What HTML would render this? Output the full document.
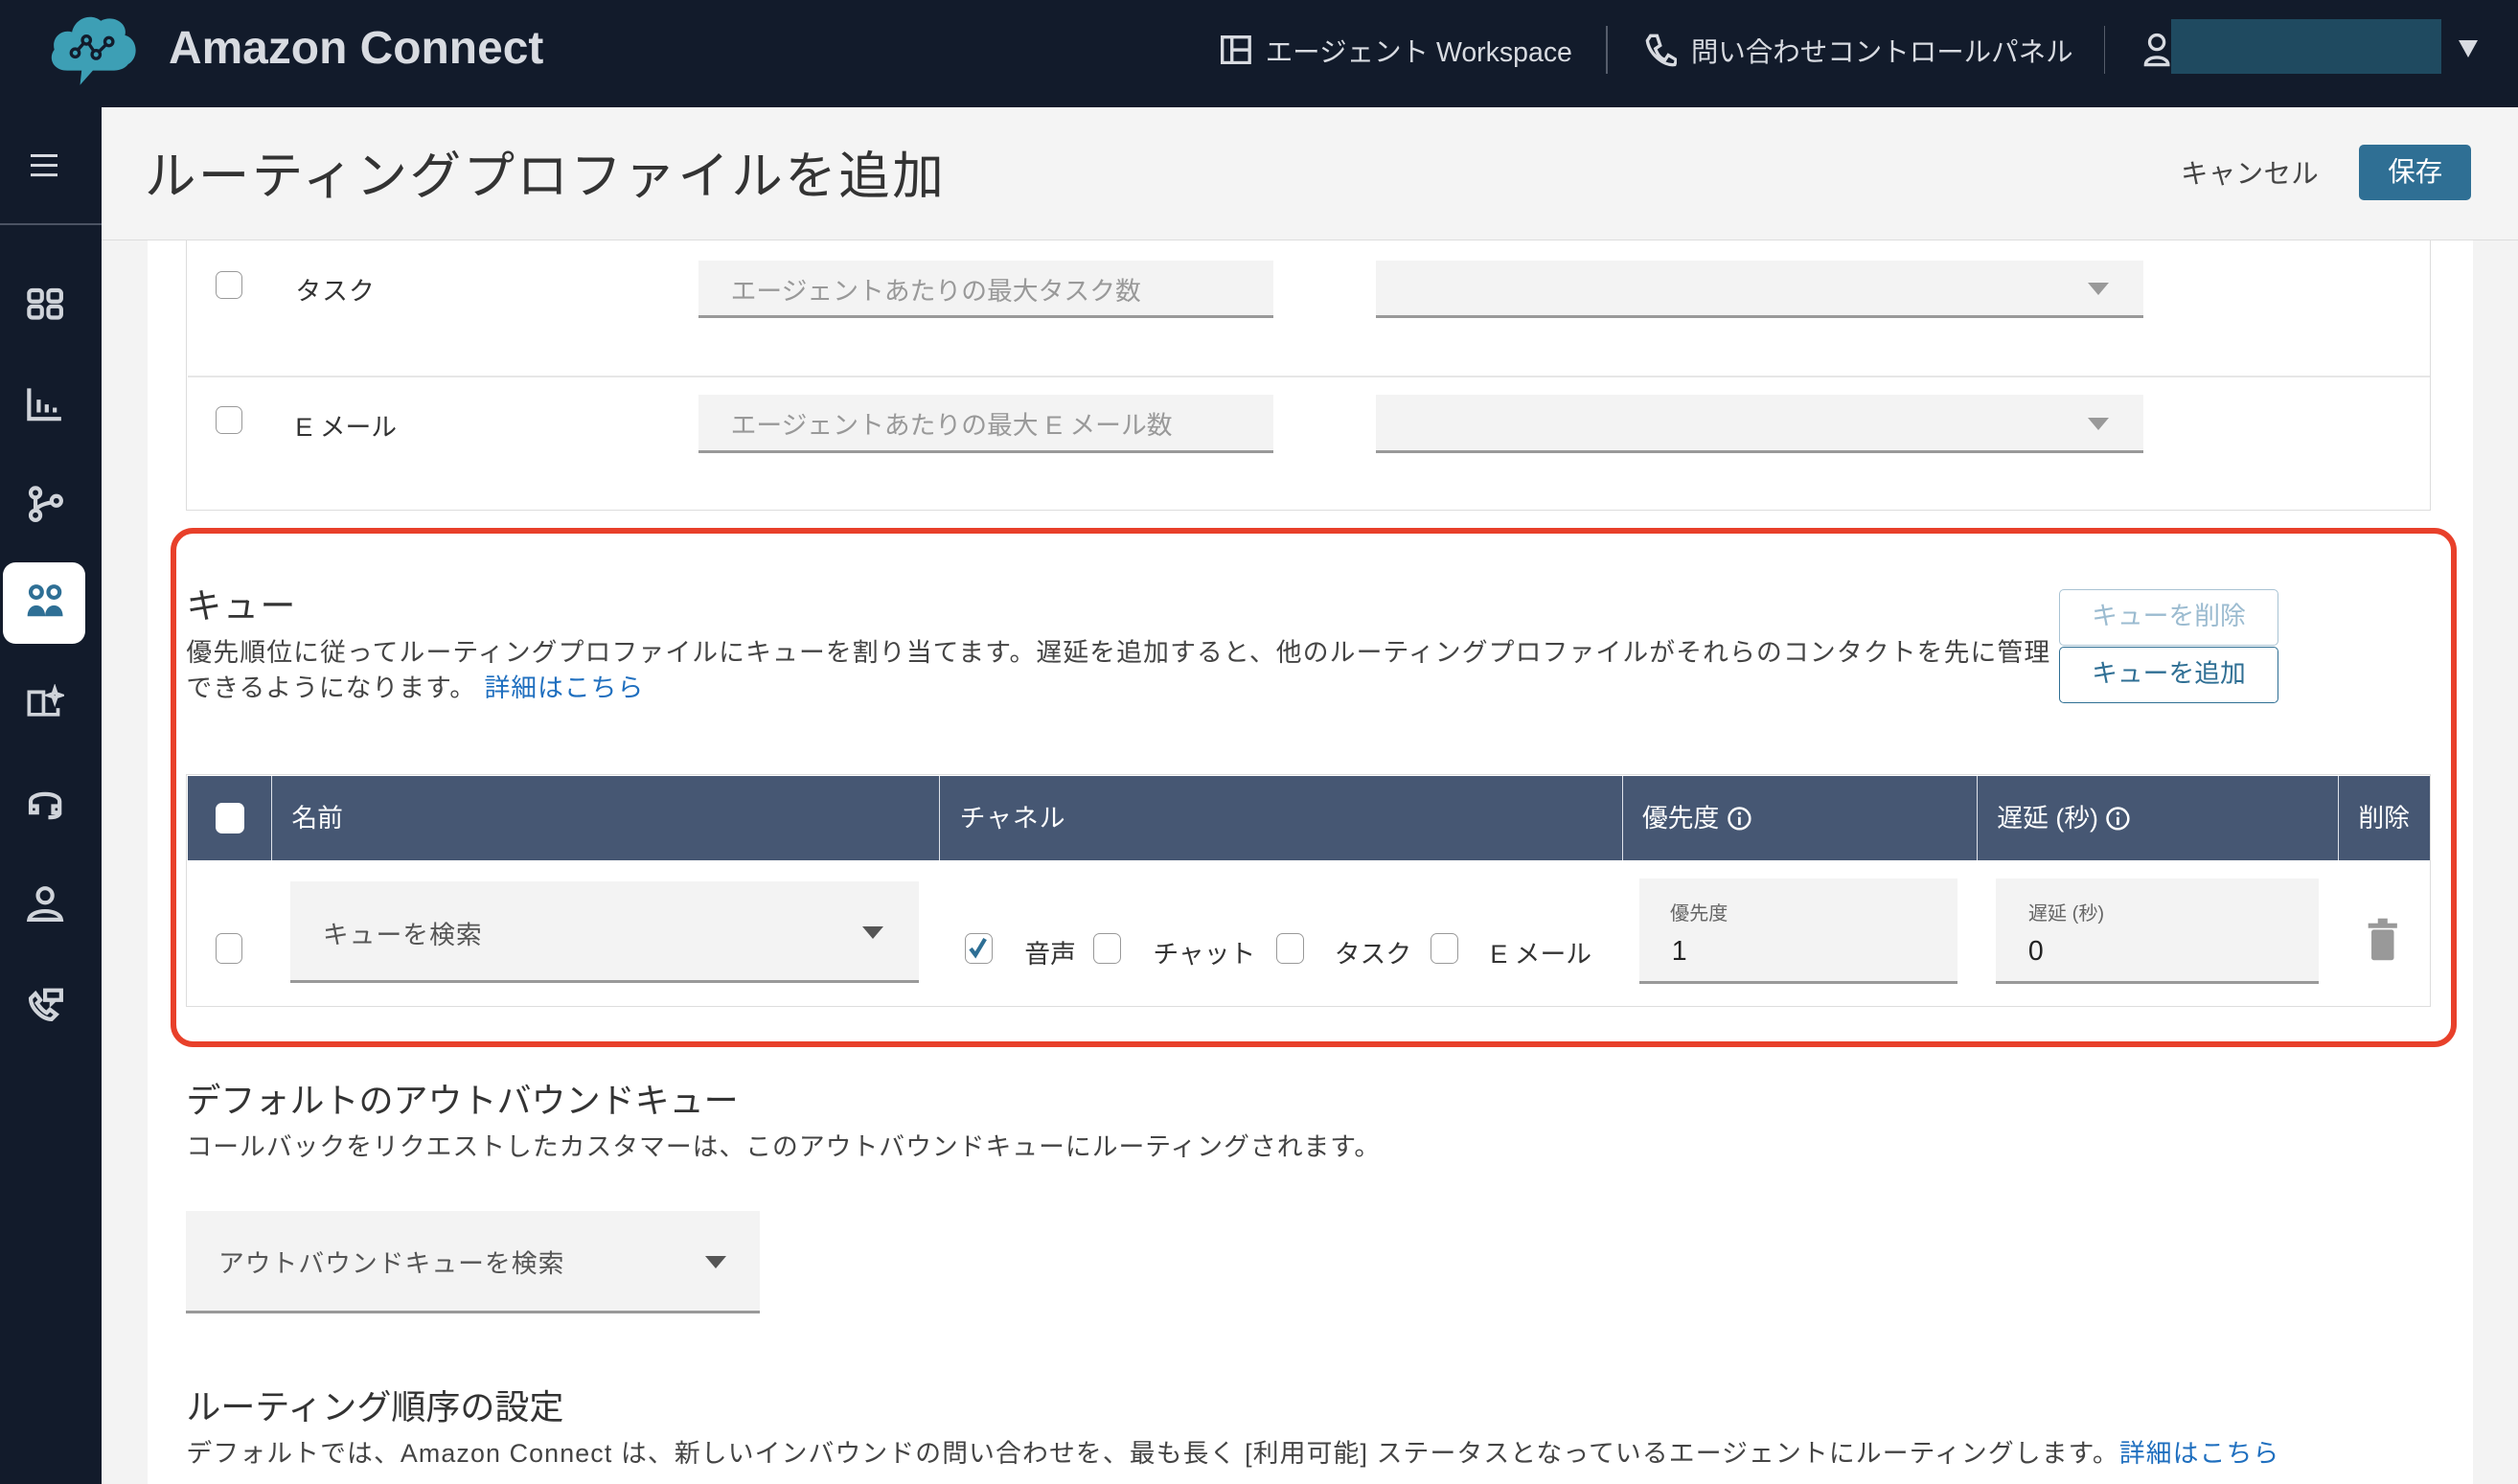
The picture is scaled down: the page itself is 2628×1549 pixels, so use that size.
<!DOCTYPE html>
<html><head><meta charset="utf-8"><style>
html{zoom:1.67602}
body{margin:0;width:1568px;height:924px;overflow:hidden;position:relative;background:#f3f3f3;font-family:"Liberation Sans","Noto Sans CJK JP",sans-serif;color:#333}
.a{position:absolute}
.hdr{left:0;top:0;width:1568px;height:67px;background:#121b2b}
.side{left:0;top:67px;width:63px;height:857px;background:#121b2b}
.t{position:absolute;white-space:nowrap}
.ls{letter-spacing:0.6px}
.cb{position:absolute;width:17px;height:17px;border:1px solid #999;border-radius:4px;background:#fff;box-sizing:border-box}
.inp{position:absolute;background:#f3f3f3;border-bottom:2px solid #999;box-sizing:border-box}
.car{position:absolute;width:0;height:0;border-left:7px solid transparent;border-right:7px solid transparent;border-top:8px solid #555}
.th{position:absolute;top:0;height:53px;border-left:1px solid #dfe3ea;box-sizing:border-box;color:#fff;font-size:16px;line-height:53px;padding-left:12px}
.ico{position:absolute;left:16px;width:24px;height:24px}
</style></head><body>
<div class="a hdr"></div>
<svg class="a" style="left:30px;top:6px" width="58" height="50" viewBox="0 0 58 50"><path d="M12 38 C3 38 0 30 4 25 C2 17 9 12 15 14 C17 5 27 2 33 7 C40 3 50 8 48 16 C56 18 57 30 50 34 C47 38 42 38 40 38 L28 38 L20 47 L21 38Z" fill="#3d9fb5"/><g stroke="#121b2b" stroke-width="2" fill="none"><path d="M17 27 L24 19 L30 28 L38 20"/><circle cx="17" cy="27" r="2.5" fill="#3d9fb5"/><circle cx="24" cy="19" r="2.5" fill="#3d9fb5"/><circle cx="30" cy="28" r="2.5" fill="#3d9fb5"/><circle cx="38" cy="20" r="2.5" fill="#3d9fb5"/></g></svg>
<div class="t" style="left:105px;top:14px;font-size:28.6px;font-weight:bold;color:#d8dbe1">Amazon Connect</div>
<svg class="a" style="left:760px;top:22px" width="19" height="18"><rect x="1" y="1" width="17" height="16" fill="none" stroke="#d8dbe1" stroke-width="2"/><path d="M7 1V17M7 9H18" stroke="#d8dbe1" stroke-width="2"/></svg>
<div class="t" style="left:788px;top:19px;font-size:17px;color:#d8dbe1">エージェント Workspace</div>
<div class="a" style="left:1000px;top:16px;width:1px;height:30px;background:#555d6b"></div>
<svg class="a" style="left:1024px;top:20px" width="20" height="22"><path d="M4 2 L8 2 L10 8 L7 10 C8 13 10 16 13 17 L15 14 L20 17 L19 20 C12 21 3 13 2 5Z" fill="none" stroke="#d8dbe1" stroke-width="2"/></svg>
<div class="t" style="left:1053px;top:19px;font-size:17px;color:#d8dbe1">問い合わせコントロールパネル</div>
<div class="a" style="left:1310px;top:16px;width:1px;height:30px;background:#555d6b"></div>
<svg class="a" style="left:1334px;top:20px" width="18" height="22"><circle cx="9" cy="6" r="4.5" fill="none" stroke="#d8dbe1" stroke-width="2"/><path d="M2 20 C2 14 16 14 16 20Z" fill="none" stroke="#d8dbe1" stroke-width="2"/></svg>
<div class="a" style="left:1352px;top:12px;width:168px;height:34px;background:#1f4a60"></div>
<div class="a" style="left:1531px;top:25px;border-left:6px solid transparent;border-right:6px solid transparent;border-top:11px solid #d8dbe1"></div>

<div class="a side"></div>
<div class="a" style="left:19px;top:96px;width:17px;height:2px;background:#d8dbe1;box-shadow:0 6px 0 #d8dbe1,0 12px 0 #d8dbe1"></div>
<div class="a" style="left:0;top:139px;width:63px;height:1px;background:#4b5363"></div>
<svg class="ico" style="top:178px" viewBox="0 0 24 24" fill="none" stroke="#d0d4da" stroke-width="2.5"><rect x="2" y="3" width="8" height="7" rx="2"/><rect x="14" y="3" width="8" height="7" rx="2"/><rect x="2" y="13" width="8" height="7" rx="2"/><rect x="14" y="13" width="8" height="7" rx="2"/></svg>
<svg class="ico" style="top:240px" viewBox="0 0 24 24" fill="none" stroke="#d0d4da" stroke-width="2.5"><path d="M2 2V21H22M8 9V17M13 12V17M18 14V17"/></svg>
<svg class="ico" style="top:302px" viewBox="0 0 24 24" fill="none" stroke="#d0d4da" stroke-width="2.5"><circle cx="6" cy="5" r="3"/><circle cx="6" cy="19" r="3"/><circle cx="19" cy="10" r="3"/><path d="M6 8V16M16 11C10 12 7 14 6 16"/></svg>
<div class="a" style="left:2px;top:350px;width:51px;height:51px;background:#fff;border-radius:8px"></div>
<svg class="ico" style="top:363px" viewBox="0 0 24 24" fill="#2e6f95"><circle cx="6.5" cy="6" r="3.5" fill="none" stroke="#2e6f95" stroke-width="2.5"/><circle cx="17.5" cy="6" r="3.5" fill="none" stroke="#2e6f95" stroke-width="2.5"/><path d="M1 21C1 12 12 12 12 21ZM12 21C12 12 23 12 23 21Z"/></svg>
<svg class="ico" style="top:426px" viewBox="0 0 24 24" fill="none" stroke="#d0d4da" stroke-width="2.2"><path d="M2 5H11V19H2ZM11 19H20V15M18 3L19 6L22 7L19 8L18 11L17 8L14 7L17 6Z"/></svg>
<svg class="ico" style="top:488px" viewBox="0 0 24 24" fill="none" stroke="#d0d4da" stroke-width="2.5"><path d="M3 17V11C3 5 21 5 21 11V18C21 21 16 21 14 21M3 14H7V18H3ZM17 14H21V18H17Z"/></svg>
<svg class="ico" style="top:551px" viewBox="0 0 24 24" fill="none" stroke="#d0d4da" stroke-width="2.5"><circle cx="12" cy="7" r="4.5"/><path d="M2 22C3 15 21 15 22 22Z"/></svg>
<svg class="ico" style="top:613px" viewBox="0 0 24 24" fill="none" stroke="#d0d4da" stroke-width="2.5"><path d="M3 9L6 6L9 10L7 12C9 15 11 17 13 18L15 16L19 19L16 22C10 22 3 15 3 9ZM12 4H22V10H18L16 12V10H12Z"/></svg>

<div class="a" style="left:63px;top:67px;width:1505px;height:82px;background:#f4f4f4;border-bottom:1px solid #ddd"></div>
<div class="t" style="left:90px;top:84px;font-size:32px;letter-spacing:1.4px;color:#333">ルーティングプロファイルを追加</div>
<div class="t ls" style="left:1358px;top:95px;font-size:17px;color:#444;letter-spacing:0.2px">キャンセル</div>
<div class="a" style="left:1469px;top:90px;width:70px;height:35px;background:#2f6f94;border-radius:3px;color:#fff;font-size:17px;line-height:35px;text-align:center">保存</div>

<div class="a" style="left:92px;top:150px;width:1448px;height:774px;background:#fff"></div>
<div class="a" style="left:116px;top:150px;width:1398px;height:168px;border:1px solid #ddd;border-top:none;box-sizing:border-box"></div>
<div class="a" style="left:117px;top:234px;width:1396px;height:1px;background:#e6e6e6"></div>
<div class="cb" style="left:134px;top:169px"></div>
<div class="t ls" style="left:184px;top:168px;font-size:16px">タスク</div>
<div class="inp" style="left:435px;top:162px;width:358px;height:36px"></div>
<div class="t" style="left:455px;top:168px;font-size:16px;color:#999">エージェントあたりの最大タスク数</div>
<div class="inp" style="left:857px;top:162px;width:478px;height:36px"></div>
<div class="car" style="left:1300px;top:176px;border-top-color:#999"></div>
<div class="cb" style="left:134px;top:253px"></div>
<div class="t" style="left:184px;top:253px;font-size:16px">E メール</div>
<div class="inp" style="left:435px;top:246px;width:358px;height:36px"></div>
<div class="t" style="left:455px;top:252px;font-size:16px;color:#999">エージェントあたりの最大 E メール数</div>
<div class="inp" style="left:857px;top:246px;width:478px;height:36px"></div>
<div class="car" style="left:1300px;top:260px;border-top-color:#999"></div>

<div class="a" style="left:106px;top:329px;width:1424px;height:323px;border:4px solid #e8402a;border-radius:14px;box-sizing:border-box"></div>
<div class="t" style="left:116px;top:359px;font-size:22px;letter-spacing:1px">キュー</div>
<div class="t ls" style="left:116px;top:393px;font-size:16px;color:#444;letter-spacing:0.68px">優先順位に従ってルーティングプロファイルにキューを割り当てます。遅延を追加すると、他のルーティングプロファイルがそれらのコンタクトを先に管理</div>
<div class="t ls" style="left:116px;top:415px;font-size:16px;color:#444">できるようになります。 <span style="color:#1f6fbf">詳細はこちら</span></div>
<div class="a" style="left:1282px;top:367px;width:137px;height:35px;border:1px solid #a9c3d3;border-radius:3px;box-sizing:border-box;color:#9bbbd0;font-size:16px;line-height:33px;text-align:center">キューを削除</div>
<div class="a" style="left:1282px;top:403px;width:137px;height:35px;border:1px solid #2f6f94;border-radius:3px;box-sizing:border-box;color:#2f6f94;font-size:16px;line-height:33px;text-align:center">キューを追加</div>

<div class="a" style="left:116px;top:482px;width:1398px;height:145px;border:1px solid #ddd;box-sizing:border-box"></div>
<div class="a" style="left:117px;top:483px;width:1396px;height:53px;background:#465773">
<div class="th" style="left:0;width:53px;border-left:none"></div>
<div class="a" style="left:17px;top:17px;width:18px;height:19px;background:#fff;border-radius:4px"></div>
<div class="th" style="left:52px;width:416px">名前</div>
<div class="th ls" style="left:468px;width:425px">チャネル</div>
<div class="th" style="left:893px;width:221px">優先度 <svg width="16" height="16" style="vertical-align:-3px"><circle cx="8" cy="8" r="6.5" fill="none" stroke="#fff" stroke-width="1.5"/><path d="M8 7V12" stroke="#fff" stroke-width="1.6"/><circle cx="8" cy="4.8" r="1" fill="#fff"/></svg></div>
<div class="th" style="left:1114px;width:225px">遅延 (秒) <svg width="16" height="16" style="vertical-align:-3px"><circle cx="8" cy="8" r="6.5" fill="none" stroke="#fff" stroke-width="1.5"/><path d="M8 7V12" stroke="#fff" stroke-width="1.6"/><circle cx="8" cy="4.8" r="1" fill="#fff"/></svg></div>
<div class="th" style="left:1339px;width:57px">削除</div>
</div>
<div class="cb" style="left:134px;top:581px;height:19px"></div>
<div class="inp" style="left:181px;top:549px;width:391px;height:63px"></div>
<div class="t ls" style="left:201px;top:569px;font-size:16px;color:#555">キューを検索</div>
<div class="car" style="left:537px;top:577px"></div>
<div class="cb" style="left:601px;top:581px;height:19px"><svg width="15" height="17" style="position:absolute;left:0;top:0"><path d="M3 9L6 13L12 3" fill="none" stroke="#2e6f95" stroke-width="2.5"/></svg></div>
<div class="t" style="left:638px;top:581px;font-size:16px">音声</div>
<div class="cb" style="left:681px;top:581px;height:19px"></div>
<div class="t" style="left:718px;top:581px;font-size:16px">チャット</div>
<div class="cb" style="left:795px;top:581px;height:19px"></div>
<div class="t" style="left:831px;top:581px;font-size:16px">タスク</div>
<div class="cb" style="left:891px;top:581px;height:19px"></div>
<div class="t" style="left:928px;top:581px;font-size:16px">E メール</div>
<div class="inp" style="left:1021px;top:547px;width:198px;height:66px"></div>
<div class="t" style="left:1040px;top:559px;font-size:12px;color:#666">優先度</div>
<div class="t" style="left:1041px;top:583px;font-size:17px;color:#222">1</div>
<div class="inp" style="left:1243px;top:547px;width:201px;height:66px"></div>
<div class="t" style="left:1263px;top:559px;font-size:12px;color:#666">遅延 (秒)</div>
<div class="t" style="left:1263px;top:583px;font-size:17px;color:#222">0</div>
<svg class="a" style="left:1474px;top:571px" width="20" height="28"><rect x="1" y="4" width="18" height="3" fill="#999"/><rect x="7" y="1" width="6" height="4" fill="#999"/><rect x="3" y="8" width="14" height="19" rx="1.5" fill="#999"/></svg>

<div class="t" style="left:116px;top:668px;font-size:21.5px">デフォルトのアウトバウンドキュー</div>
<div class="t ls" style="left:116px;top:701px;font-size:16px;color:#444">コールバックをリクエストしたカスタマーは、このアウトバウンドキューにルーティングされます。</div>
<div class="inp" style="left:116px;top:754px;width:357px;height:64px"></div>
<div class="t ls" style="left:136px;top:774px;font-size:16px;color:#555">アウトバウンドキューを検索</div>
<div class="car" style="left:439px;top:782px"></div>
<div class="t" style="left:116px;top:859px;font-size:21.5px">ルーティング順序の設定</div>
<div class="t" style="left:116px;top:892px;font-size:16px;color:#444;letter-spacing:0.68px">デフォルトでは、Amazon Connect は、新しいインバウンドの問い合わせを、最も長く [利用可能] ステータスとなっているエージェントにルーティングします。<span style="color:#1f6fbf">詳細はこちら</span></div>
</body></html>
